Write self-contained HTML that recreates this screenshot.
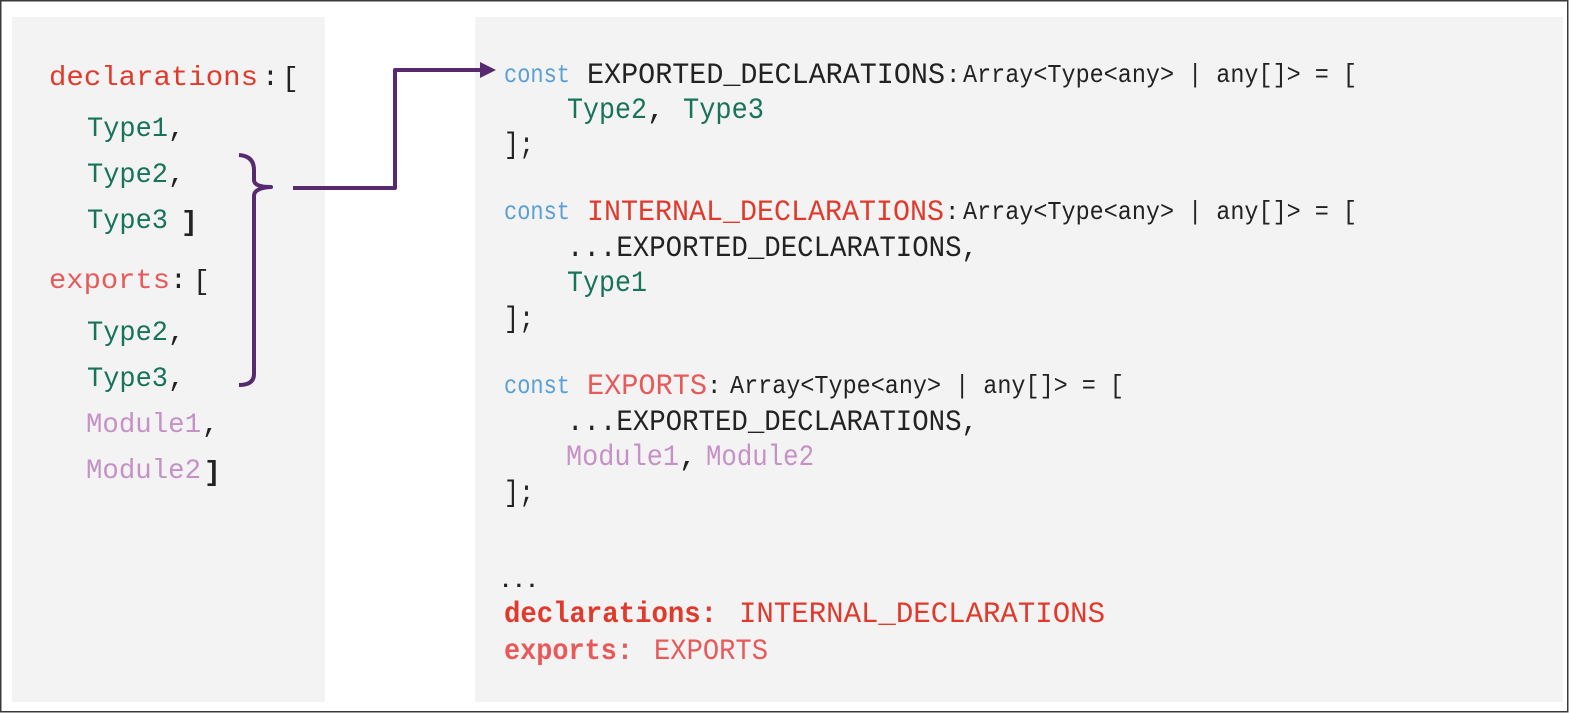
<!DOCTYPE html>
<html><head><meta charset="utf-8"><style>
html,body{margin:0;padding:0;background:#fff}
svg{display:block}
text{font-family:"Liberation Mono",monospace}
</style></head><body>
<svg width="1570" height="713" viewBox="0 0 1570 713" xmlns="http://www.w3.org/2000/svg">
<rect x="0" y="0" width="1570" height="713" fill="#fff"/>
<rect x="0.75" y="0.75" width="1567" height="711" fill="none" stroke="#3a3a3a" stroke-width="1.5"/>
<rect x="12" y="17" width="313" height="685" fill="#f3f3f3"/>
<rect x="475" y="17" width="1088" height="685" fill="#f3f3f3"/>

<!-- left -->
<g font-size="28">
<text x="49" y="85" fill="#e03a2c" textLength="209" lengthAdjust="spacingAndGlyphs">declarations</text>
<text x="262" y="85" fill="#222">:</text>
<text x="282" y="86" fill="#222">[</text>
<text x="87" y="136" fill="#17735a" textLength="81" lengthAdjust="spacingAndGlyphs">Type1</text><text x="168" y="136" fill="#222">,</text>
<text x="87" y="182" fill="#17735a" textLength="81" lengthAdjust="spacingAndGlyphs">Type2</text><text x="168" y="182" fill="#222">,</text>
<text x="87" y="228" fill="#17735a" textLength="81" lengthAdjust="spacingAndGlyphs">Type3</text><text x="181" y="230" fill="#222" font-weight="bold">]</text>
<text x="49" y="288" fill="#e85a5a" textLength="121" lengthAdjust="spacingAndGlyphs">exports</text>
<text x="170" y="288" fill="#222">:</text>
<text x="193" y="289" fill="#222">[</text>
<text x="87" y="340" fill="#17735a" textLength="81" lengthAdjust="spacingAndGlyphs">Type2</text><text x="168" y="340" fill="#222">,</text>
<text x="87" y="386" fill="#17735a" textLength="81" lengthAdjust="spacingAndGlyphs">Type3</text><text x="168" y="386" fill="#222">,</text>
<text x="86" y="432" fill="#c591c6" textLength="115" lengthAdjust="spacingAndGlyphs">Module1</text><text x="202" y="432" fill="#222">,</text>
<text x="86" y="478" fill="#c591c6" textLength="115" lengthAdjust="spacingAndGlyphs">Module2</text><text x="204" y="480" fill="#222" font-weight="bold">]</text>
</g>

<!-- brace and arrow -->
<g fill="none" stroke="#572a70" stroke-width="4" stroke-linejoin="round">
<path d="M239 155 Q254 156 254 170 L254 180 Q254 187 271 187 Q254 188 254 196 L254 374 Q254 385 239 385"/>
<path d="M293 188 L395 188 L395 70 L482 70"/>
</g>
<path d="M480 62 L496 70 L480 78 Z" fill="#572a70"/>

<!-- right code -->
<g font-size="30" fill="#222">
<text x="504" y="82" fill="#5a9fd6" font-size="26" textLength="66" lengthAdjust="spacingAndGlyphs">const</text>
<text x="587" y="83" textLength="358" lengthAdjust="spacingAndGlyphs">EXPORTED_DECLARATIONS</text>
<text x="946" y="82" font-size="24">:</text>
<text x="963" y="82" font-size="26" textLength="394" lengthAdjust="spacingAndGlyphs">Array&lt;Type&lt;any&gt; | any[]&gt; = [</text>
<text x="567" y="118" fill="#17735a" textLength="80" lengthAdjust="spacingAndGlyphs">Type2</text>
<text x="647" y="118">,</text>
<text x="683" y="118" fill="#17735a" textLength="81" lengthAdjust="spacingAndGlyphs">Type3</text>
<text x="504" y="153" textLength="30" lengthAdjust="spacingAndGlyphs">];</text>

<text x="504" y="219" fill="#5a9fd6" font-size="26" textLength="66" lengthAdjust="spacingAndGlyphs">const</text>
<text x="587" y="220" fill="#e03a2c" textLength="357" lengthAdjust="spacingAndGlyphs">INTERNAL_DECLARATIONS</text>
<text x="945" y="219" font-size="24">:</text>
<text x="963" y="219" font-size="26" textLength="394" lengthAdjust="spacingAndGlyphs">Array&lt;Type&lt;any&gt; | any[]&gt; = [</text>
<text x="567" y="256" textLength="411" lengthAdjust="spacingAndGlyphs">...EXPORTED_DECLARATIONS,</text>
<text x="567" y="291" fill="#17735a" textLength="80" lengthAdjust="spacingAndGlyphs">Type1</text>
<text x="504" y="327" textLength="30" lengthAdjust="spacingAndGlyphs">];</text>

<text x="504" y="393" fill="#5a9fd6" font-size="26" textLength="66" lengthAdjust="spacingAndGlyphs">const</text>
<text x="587" y="394" fill="#e85a5a" textLength="120" lengthAdjust="spacingAndGlyphs">EXPORTS</text>
<text x="707" y="393" font-size="24">:</text>
<text x="730" y="393" font-size="26" textLength="394" lengthAdjust="spacingAndGlyphs">Array&lt;Type&lt;any&gt; | any[]&gt; = [</text>
<text x="567" y="430" textLength="411" lengthAdjust="spacingAndGlyphs">...EXPORTED_DECLARATIONS,</text>
<text x="566" y="465" fill="#c591c6" textLength="113" lengthAdjust="spacingAndGlyphs">Module1</text>
<text x="679" y="465">,</text>
<text x="706" y="465" fill="#c591c6" textLength="108" lengthAdjust="spacingAndGlyphs">Module2</text>
<text x="504" y="501" textLength="30" lengthAdjust="spacingAndGlyphs">];</text>

<text x="499" y="587" font-size="22" font-weight="bold">...</text>
<text x="504" y="622" fill="#e03a2c" font-weight="bold" textLength="213" lengthAdjust="spacingAndGlyphs">declarations:</text>
<text x="739" y="622" fill="#e03a2c" textLength="366" lengthAdjust="spacingAndGlyphs">INTERNAL_DECLARATIONS</text>
<text x="504" y="659" fill="#e85a5a" font-weight="bold" textLength="129" lengthAdjust="spacingAndGlyphs">exports:</text>
<text x="654" y="659" fill="#e85a5a" textLength="114" lengthAdjust="spacingAndGlyphs">EXPORTS</text>
</g>
</svg>
</body></html>
